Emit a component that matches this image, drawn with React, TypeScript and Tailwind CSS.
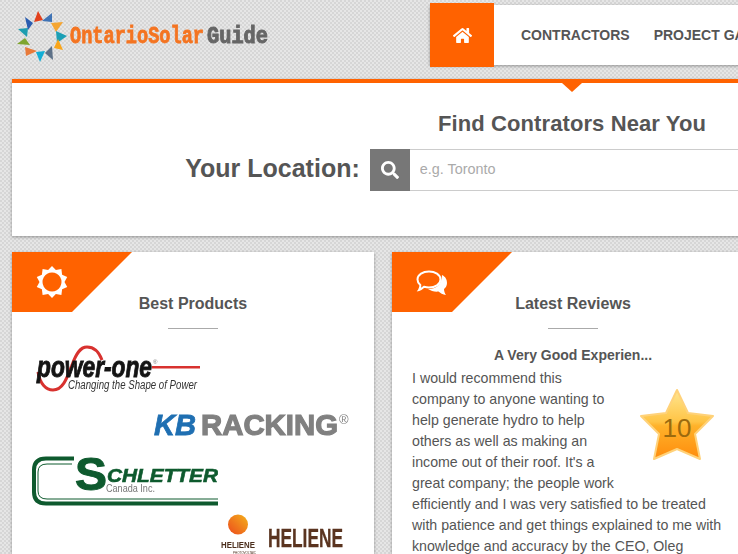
import { FaHome, FaSearch } from "react-icons/fa";

const sunRays = [
  { points: "38,11 34,22 43,20", fill: "#e2401c" },
  { points: "52,13 42,21 52,22", fill: "#3f73b5" },
  { points: "51,23 63,22 56,32", fill: "#f5a531" },
  { points: "56,31 67,36 57,43", fill: "#1b9fb5" },
  { points: "58,39 63,50 54,48", fill: "#f9a51a" },
  { points: "52,46 53,60 45,53", fill: "#5d7188" },
  { points: "45,51 40,62 36,52", fill: "#12aed6" },
  { points: "25,47 37,51 26,56", fill: "#e87a3a" },
  { points: "25,38 30,45 17,44", fill: "#7fa52f" },
  { points: "18,29 28,28 27,37", fill: "#1e9db0" },
  { points: "25,17 33,23 28,30", fill: "#2a5db0" }
];

const sunPath = (() => {
  const parts: string[] = [];
  const spikes = 10;
  for (let i = 0; i < spikes * 2; i++) {
    const r = i % 2 === 0 ? 16 : 12.5;
    const a = (Math.PI * i) / spikes - Math.PI / 2;
    parts.push(`${i === 0 ? "M" : "L"}${(16 + r * Math.cos(a)).toFixed(2)},${(16 + r * Math.sin(a)).toFixed(2)}`);
  }
  return `${parts.join(" ")} Z M16,6.5 a9.5,9.5 0 1,0 0.01,0 Z`;
})();

function Logo() {
  return (
    <svg width="260" height="60" viewBox="16 5 260 60" className="ml-[4px] mt-[5px] block shrink-0 blur-[0.3px]">
      {sunRays.map((ray) => (
        <polygon key={ray.points} points={ray.points} fill={ray.fill} />
      ))}
      <text x="70" y="43" fontFamily="'Liberation Mono', monospace" fontWeight="700" fontSize="24" fill="#f47421" stroke="#f47421" strokeWidth="0.8" textLength="134" lengthAdjust="spacingAndGlyphs">
        OntarioSolar
      </text>
      <text x="207" y="43" fontFamily="'Liberation Mono', monospace" fontWeight="700" fontSize="24" fill="#666666" stroke="#666666" strokeWidth="1" textLength="61" lengthAdjust="spacingAndGlyphs">
        Guide
      </text>
    </svg>
  );
}

function PowerOneLogo() {
  return (
    <svg width="165" height="48" viewBox="36 345 165 48" className="ml-[24px] mt-[16px] block blur-[0.3px]">
      <path d="M38,372 C40,384 46,390 53,390 C63,390 67,378 72,365 C76,354 80,347 87,347 C95,347 99,352 102,360" fill="none" stroke="#d8322f" strokeWidth="3" />
      <text x="37" y="377" fontFamily="'Liberation Sans', sans-serif" fontWeight="700" fontStyle="italic" fontSize="29" fill="#141414" stroke="#141414" strokeWidth="0.9" textLength="115" lengthAdjust="spacingAndGlyphs">
        power-one
      </text>
      <rect x="152" y="366" width="48" height="2.5" fill="#d8322f" />
      <text x="153" y="364" fontFamily="'Liberation Sans', sans-serif" fontSize="6" fill="#777777">®</text>
      <text x="68" y="389" fontFamily="'Liberation Sans', sans-serif" fontStyle="italic" fontSize="12.5" fill="#333333" textLength="129" lengthAdjust="spacingAndGlyphs">
        Changing the Shape of Power
      </text>
    </svg>
  );
}

function KbRackingLogo() {
  return (
    <svg width="198" height="28" viewBox="153 411 198 28" className="ml-[141px] mt-[18px] block blur-[0.3px]">
      <text x="154" y="435" fontFamily="'Liberation Sans', sans-serif" fontWeight="700" fontStyle="italic" fontSize="30" fill="#1f6fb2" stroke="#1f6fb2" strokeWidth="0.8" textLength="42" lengthAdjust="spacingAndGlyphs">
        KB
      </text>
      <text x="201" y="435" fontFamily="'Liberation Sans', sans-serif" fontWeight="700" fontSize="30" fill="#808080" stroke="#808080" strokeWidth="1.2" textLength="137" lengthAdjust="spacingAndGlyphs">
        RACKING
      </text>
      <text x="339" y="424" fontFamily="'Liberation Sans', sans-serif" fontSize="13" fill="#808080">®</text>
    </svg>
  );
}

function SchletterLogo() {
  return (
    <svg width="186" height="51" viewBox="32 456 186 51" className="ml-[20px] mt-[17px] block blur-[0.3px]">
      <path d="M74,458.5 H46 Q34,458.5 34,470 V492 Q34,503.5 46,503.5 H218" fill="none" stroke="#0e5a2e" strokeWidth="4" />
      <path d="M72,464 H47 Q38,464 38,472 V491 Q38,499 47,499 H218" fill="none" stroke="#0e5a2e" strokeWidth="1" />
      <text x="75" y="490" fontFamily="'Liberation Sans', sans-serif" fontWeight="700" fontSize="46" fill="#0e5a2e" stroke="#0e5a2e" strokeWidth="1" textLength="32" lengthAdjust="spacingAndGlyphs">
        S
      </text>
      <text x="107" y="482" fontFamily="'Liberation Sans', sans-serif" fontWeight="700" fontStyle="italic" fontSize="19" fill="#0e5a2e" stroke="#0e5a2e" strokeWidth="0.6" textLength="111" lengthAdjust="spacingAndGlyphs">
        CHLETTER
      </text>
      <text x="106" y="492" fontFamily="'Liberation Sans', sans-serif" fontSize="10" fill="#777777" textLength="49" lengthAdjust="spacingAndGlyphs">
        Canada Inc.
      </text>
    </svg>
  );
}

function HelieneLogo() {
  return (
    <svg width="125" height="44" viewBox="220 514 125 44" className="ml-[208px] mt-[7px] block blur-[0.2px]">
      <defs>
        <linearGradient id="helieneSun" x1="0" y1="1" x2="1" y2="0">
          <stop offset="0%" stopColor="#ec4a1c" />
          <stop offset="100%" stopColor="#f4b21c" />
        </linearGradient>
      </defs>
      <circle cx="238" cy="524.5" r="10" fill="url(#helieneSun)" />
      <text x="221" y="548" fontFamily="'Liberation Sans', sans-serif" fontWeight="700" fontSize="9" fill="#4c2f1e" textLength="34" lengthAdjust="spacingAndGlyphs">
        HELIENE
      </text>
      <text x="233" y="554" fontFamily="'Liberation Sans', sans-serif" fontSize="3" fill="#4c2f1e" textLength="23" lengthAdjust="spacingAndGlyphs">
        PHOTOVOLTAIC
      </text>
      <text x="268" y="547" fontFamily="'Liberation Sans', sans-serif" fontWeight="700" fontSize="26" fill="#5a3420" stroke="#5a3420" strokeWidth="0.3" textLength="75" lengthAdjust="spacingAndGlyphs">
        HELIENE
      </text>
    </svg>
  );
}

function Star() {
  return (
    <div className="relative float-right mt-[20px] h-[90px] w-[110px]">
      <svg width="76" height="73" viewBox="0 0 76 73" className="ml-[19px] block">
        <defs>
          <linearGradient id="starFill" x1="0" y1="0" x2="0" y2="1">
            <stop offset="0%" stopColor="#ffe690" />
            <stop offset="46%" stopColor="#ffc445" />
            <stop offset="52%" stopColor="#ffb22a" />
            <stop offset="100%" stopColor="#ff8c0c" />
          </linearGradient>
        </defs>
        <polygon
          points="38,2 49,25 74,28 56,46 61,71 38,61 15,71 20,46 2,28 27,25"
          fill="url(#starFill)"
          stroke="#ffd27a"
          strokeWidth="2"
          strokeLinejoin="round"
        />
      </svg>
      <span className="absolute left-[19px] top-[25px] w-[76px] text-center text-[26px] leading-[30px] text-[#9b6a0e]">10</span>
    </div>
  );
}

function CardBadge({ children }: { children: React.ReactNode }) {
  return (
    <div className="absolute left-0 top-0 flex h-[60px] w-[120px] bg-[#ff6200] [clip-path:polygon(0_0,100%_0,50%_100%,0_100%)]">
      {children}
    </div>
  );
}

function CardTitle({ children }: { children: React.ReactNode }) {
  return (
    <>
      <h3 className="pt-[43px] text-center text-base leading-[18px] font-bold text-[#555555]">{children}</h3>
      <div className="mx-auto mt-[15px] h-px w-[50px] bg-[#aaaaaa]" />
    </>
  );
}

export default function App() {
  return (
    <div className="h-[554px] w-[738px] overflow-hidden bg-[#dedede] bg-[image:repeating-conic-gradient(#e6e6e6_0%_25%,#d6d6d6_0%_50%)] bg-[length:4px_4px] font-['Liberation_Sans',Arial,sans-serif] text-[#555555]">
      <div className="ml-[12px] w-[1120px]">
        <header className="flex h-[79px]">
          <Logo />
          <nav className="ml-[154px] mt-[5px] flex h-[60px] flex-1 items-center bg-white shadow-[0_1px_3px_rgba(0,0,0,0.35)]">
            <a className="flex h-[64px] w-[64px] shrink-0 items-center justify-center bg-[#ff6200] text-white">
              <FaHome className="h-[19px] w-[19px]" />
            </a>
            <a className="ml-[27px] text-sm font-bold whitespace-nowrap">CONTRACTORS</a>
            <a className="ml-[24px] text-sm font-bold whitespace-nowrap">PROJECT GALLERY</a>
          </nav>
        </header>

        <section className="relative h-[157px] border-t-4 border-[#ff6200] bg-white shadow-[0_1px_3px_rgba(0,0,0,0.35)]">
          <div className="absolute left-[550px] top-0 h-0 w-0 border-x-[10px] border-t-[9px] border-x-transparent border-t-[#ff6200]" />
          <h2 className="pt-[28px] text-center text-[22px] leading-[26px] font-bold tracking-[0.1px]">Find Contrators Near You</h2>
          <div className="mt-[12px] flex items-center justify-center">
            <label className="mb-[4px] mr-[10px] text-[25px] leading-[30px] font-bold whitespace-nowrap">Your Location:</label>
            <div className="flex h-[42px] w-[589px]">
              <div className="flex w-[40px] shrink-0 items-center justify-center bg-[#777777] text-white">
                <FaSearch className="h-[18px] w-[18px]" />
              </div>
              <input
                placeholder="e.g. Toronto"
                className="min-w-0 flex-1 border-y border-[#cccccc] bg-white pl-[10px] text-[14.4px] outline-none placeholder:text-[#aaaaaa]"
              />
            </div>
          </div>
        </section>

        <div className="mt-[16px] flex gap-[18px]">
          <article className="relative h-[400px] w-[362px] shrink-0 bg-white shadow-[0_1px_3px_rgba(0,0,0,0.35)]">
            <CardBadge>
              <svg width="32" height="32" viewBox="0 0 32 32" className="ml-[24px] mt-[14px]">
                <path d={sunPath} fill="#ffffff" fillRule="evenodd" />
              </svg>
            </CardBadge>
            <CardTitle>Best Products</CardTitle>
            <PowerOneLogo />
            <KbRackingLogo />
            <SchletterLogo />
            <HelieneLogo />
          </article>

          <article className="relative h-[400px] w-[362px] shrink-0 bg-white shadow-[0_1px_3px_rgba(0,0,0,0.35)]">
            <CardBadge>
              <svg width="32" height="28" viewBox="0 0 32 28" className="ml-[24px] mt-[18px]">
                <path d="M26,5 C30,7 31,10 31,13 C31,16 29.5,18 28,19 C28,21 29,24 30,25 C27,24.5 24,23 22.5,21.5 C19,22 15,21 12,19 C18,19.5 26,16 26,5 Z" fill="#ffffff" />
                <path d="M13,1.5 C19,1.5 24.5,4.5 24.5,9.5 C24.5,14.5 19,17.5 13,17.5 C11,17.5 9.5,17.2 8,16.8 C6.5,18.2 5,19.5 3,20 C4,18.5 4.5,16.5 4.3,15 C2.5,13.5 1.5,11.5 1.5,9.5 C1.5,4.5 7,1.5 13,1.5 Z" fill="none" stroke="#ffffff" strokeWidth="2" />
              </svg>
            </CardBadge>
            <CardTitle>Latest Reviews</CardTitle>
            <div className="pl-[20px] pr-[24px]">
              <h4 className="-mr-[4px] mt-[17px] text-center text-sm leading-[18px] font-bold">A Very Good Experien...</h4>
              <div className="mt-[4px] text-[14.2px] leading-[21px]">
                <Star />
                <p>
                  I would recommend this company to anyone wanting to help generate hydro to help others as well as making an income out of their roof. It's a great company; the people work efficiently and I was very satisfied to be treated with patience and get things explained to me with knowledge and accuracy by the CEO, Oleg
                </p>
              </div>
            </div>
          </article>
        </div>
      </div>
    </div>
  );
}
